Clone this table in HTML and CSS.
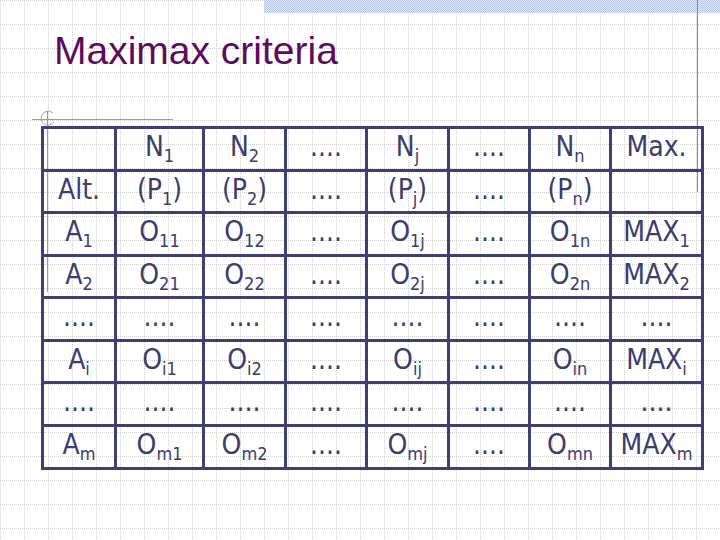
FILE: index.html
```html
<!DOCTYPE html>
<html>
<head>
<meta charset="utf-8">
<title>Maximax criteria</title>
<link rel="stylesheet" href="styles.css">
</head>
<body>
<svg class="deco" width="720" height="540" viewBox="0 0 720 540" aria-hidden="true">
  <defs>
    <pattern id="grid" width="24" height="24" patternUnits="userSpaceOnUse">
      <line x1="0.5" y1="0" x2="0.5" y2="24" class="gridline"/>
      <line x1="0" y1="0.5" x2="24" y2="0.5" class="gridline"/>
    </pattern>
    <pattern id="check" width="2" height="2" patternUnits="userSpaceOnUse">
      <rect x="0" y="0" width="2" height="2" class="check-light"/>
      <rect x="0" y="0" width="1" height="1" class="check-dark"/>
      <rect x="1" y="1" width="1" height="1" class="check-dark"/>
    </pattern>
  </defs>
  <rect x="0" y="0" width="720" height="540" fill="url(#grid)"/>
  <rect x="264" y="0" width="456" height="13" fill="url(#check)"/>
  <line x1="697.5" y1="0" x2="697.5" y2="192" class="rule-dark"/>
  <line x1="32" y1="119.5" x2="173" y2="119.5" class="rule"/>
  <line x1="47.5" y1="111" x2="47.5" y2="292" class="rule"/>
  <path d="M 53 113 A 7 7 0 1 0 54 122" class="ring"/>
</svg>

<h1 class="title">Maximax criteria</h1>

<div class="matrix">
  <div class="cell"></div>
  <div class="cell">N<sub>1</sub></div>
  <div class="cell">N<sub>2</sub></div>
  <div class="cell">....</div>
  <div class="cell">N<sub>j</sub></div>
  <div class="cell">....</div>
  <div class="cell">N<sub>n</sub></div>
  <div class="cell">Max.</div>

  <div class="cell">Alt.</div>
  <div class="cell">(P<sub>1</sub>)</div>
  <div class="cell">(P<sub>2</sub>)</div>
  <div class="cell">....</div>
  <div class="cell">(P<sub>j</sub>)</div>
  <div class="cell">....</div>
  <div class="cell">(P<sub>n</sub>)</div>
  <div class="cell"></div>

  <div class="cell">A<sub>1</sub></div>
  <div class="cell">O<sub>11</sub></div>
  <div class="cell">O<sub>12</sub></div>
  <div class="cell">....</div>
  <div class="cell">O<sub>1j</sub></div>
  <div class="cell">....</div>
  <div class="cell">O<sub>1n</sub></div>
  <div class="cell">MAX<sub>1</sub></div>

  <div class="cell">A<sub>2</sub></div>
  <div class="cell">O<sub>21</sub></div>
  <div class="cell">O<sub>22</sub></div>
  <div class="cell">....</div>
  <div class="cell">O<sub>2j</sub></div>
  <div class="cell">....</div>
  <div class="cell">O<sub>2n</sub></div>
  <div class="cell">MAX<sub>2</sub></div>

  <div class="cell">....</div>
  <div class="cell">....</div>
  <div class="cell">....</div>
  <div class="cell">....</div>
  <div class="cell">....</div>
  <div class="cell">....</div>
  <div class="cell">....</div>
  <div class="cell">....</div>

  <div class="cell">A<sub>i</sub></div>
  <div class="cell">O<sub>i1</sub></div>
  <div class="cell">O<sub>i2</sub></div>
  <div class="cell">....</div>
  <div class="cell">O<sub>ij</sub></div>
  <div class="cell">....</div>
  <div class="cell">O<sub>in</sub></div>
  <div class="cell">MAX<sub>i</sub></div>

  <div class="cell">....</div>
  <div class="cell">....</div>
  <div class="cell">....</div>
  <div class="cell">....</div>
  <div class="cell">....</div>
  <div class="cell">....</div>
  <div class="cell">....</div>
  <div class="cell">....</div>

  <div class="cell">A<sub>m</sub></div>
  <div class="cell">O<sub>m1</sub></div>
  <div class="cell">O<sub>m2</sub></div>
  <div class="cell">....</div>
  <div class="cell">O<sub>mj</sub></div>
  <div class="cell">....</div>
  <div class="cell">O<sub>mn</sub></div>
  <div class="cell">MAX<sub>m</sub></div>
</div>
</body>
</html>
```

FILE: styles.css
```css
html, body {
  margin: 0;
  padding: 0;
}

body {
  width: 720px;
  height: 540px;
  overflow: hidden;
  background: #ffffff;
  position: relative;
}

.deco {
  position: absolute;
  left: 0;
  top: 0;
}

.gridline {
  stroke: #cfcfcf;
  stroke-width: 1;
  stroke-dasharray: 1 1;
}

.check-light {
  fill: #e4eaf6;
}

.check-dark {
  fill: #b7c5e4;
}

.rule-dark {
  stroke: #7d86b6;
  stroke-width: 1;
}

.rule {
  stroke: #8f99cc;
  stroke-width: 1;
}

.ring {
  fill: none;
  stroke: #9aa3d2;
  stroke-width: 1;
}

.title {
  position: relative;
  margin: 0;
  padding: 31px 0 0 54px;
  font-family: "Liberation Sans", Arial, sans-serif;
  font-size: 39px;
  line-height: 39px;
  font-weight: normal;
  color: #5e0b5e;
}

.matrix {
  position: relative;
  margin: 56px 0 0 41px;
  display: grid;
  grid-template-columns: 73px 88px 82px 81px 82px 81px 81px 92px;
  grid-template-rows: 43px 42px 43px 42px 43px 42px 43px 43px;
  width: max-content;
  border-top: 3px solid #3f3f72;
  border-left: 3px solid #3f3f72;
}

.cell {
  box-sizing: border-box;
  border-right: 3px solid #3f3f72;
  border-bottom: 3px solid #3f3f72;
  text-align: center;
  font-family: "DejaVu Sans Condensed", "DejaVu Sans", sans-serif;
  font-size: 28px;
  line-height: 36px;
  color: #3c3c6e;
  white-space: nowrap;
  overflow: visible;
}

.cell sub {
  font-size: 18px;
  line-height: 0;
  vertical-align: -6px;
}
```
